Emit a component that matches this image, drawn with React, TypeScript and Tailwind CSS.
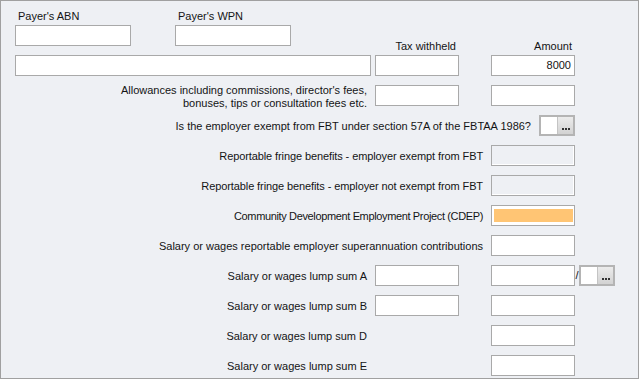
const box = "h-[21px] border border-[#a9a9a9] bg-white";
const disabledBox =
  "h-[21px] border border-[#a9a9a9] bg-[#eef0f4] shadow-[inset_-1px_-1px_0_#ffffff]";

function Ellipsis() {
  return (
    <div className="flex h-[21px] w-[36px] border-2 border-[#b4b4b4] bg-white">
      <div className="flex-1 bg-white" />
      <div className="flex w-[16px] items-end justify-center border-l border-[#c4c4c4] bg-gradient-to-b from-[#ececec] to-[#d2d2d2] pb-[4px]">
        <div className="flex gap-[1px]">
          <span className="h-[2px] w-[2px] bg-[#333]" />
          <span className="h-[2px] w-[2px] bg-[#333]" />
          <span className="h-[2px] w-[2px] bg-[#333]" />
        </div>
      </div>
    </div>
  );
}

function Label({ w, children, track = "" }: { w: string; children: React.ReactNode; track?: string }) {
  return <div className={`${w} ${track} text-right leading-[13px] pt-[1px]`}>{children}</div>;
}

export default function App() {
  return (
    <div
      className="h-[379px] w-[639px] overflow-hidden border border-[#a0a0a0] bg-[#eef0f4] text-[11px] text-[#141414]"
      style={{ fontFamily: '"Liberation Sans", Arial, sans-serif' }}
    >
      <div className="pl-[14px] pt-[9px]">
        {/* payer labels */}
        <div className="flex h-[13px] leading-[13px]">
          <span className="w-[160px] pl-[3px]">Payer's ABN</span>
          <span className="pl-[3px]">Payer's WPN</span>
        </div>

        {/* payer inputs + column headers */}
        <div className="mt-[2px] flex h-[30px]">
          <div className={`${box} w-[116px]`} />
          <div className={`${box} ml-[44px] w-[116px]`} />
          <div className="mb-[2px] ml-[84px] w-[84px] self-end pr-[3px] text-right leading-[13px]">
            Tax withheld
          </div>
          <div className="mb-[2px] ml-[32px] w-[84px] self-end pr-[3px] text-right leading-[13px]">
            Amount
          </div>
        </div>

        <div className="flex flex-col gap-[9px]">
          <div className="flex h-[21px]">
            <div className={`${box} w-[356px]`} />
            <div className={`${box} ml-[4px] w-[84px]`} />
            <div className={`${box} ml-[32px] flex w-[84px] items-center justify-end pr-[3px]`}>
              8000
            </div>
          </div>

          <div className="flex h-[21px] items-start">
            <div className="-mt-[1px] w-[352px] text-right leading-[13px]">
              Allowances including commissions, director's fees,
              <br />
              bonuses, tips or consultation fees etc.
            </div>
            <div className={`${box} ml-[8px] w-[84px]`} />
            <div className={`${box} ml-[32px] w-[84px]`} />
          </div>

          <div className="flex h-[21px] items-center">
            <Label w="w-[516px]">
              Is the employer exempt from FBT under section 57A of the FBTAA 1986?
            </Label>
            <div className="ml-[8px]">
              <Ellipsis />
            </div>
          </div>

          <div className="flex h-[21px] items-center">
            <Label w="w-[468px]" track="tracking-[-0.1px]">
              Reportable fringe benefits - employer exempt from FBT
            </Label>
            <div className={`${disabledBox} ml-[8px] w-[84px]`} />
          </div>

          <div className="flex h-[21px] items-center">
            <Label w="w-[468px]" track="tracking-[-0.1px]">
              Reportable fringe benefits - employer not exempt from FBT
            </Label>
            <div className={`${disabledBox} ml-[8px] w-[84px]`} />
          </div>

          <div className="flex h-[21px] items-center">
            <Label w="w-[468px]" track="tracking-[-0.36px]">
              Community Development Employment Project (CDEP)
            </Label>
            <div className={`${box} ml-[8px] w-[84px] pb-[3px] pl-[2px] pr-[1px] pt-[3px]`}>
              <div className="h-full w-full bg-[#ffc574]" />
            </div>
          </div>

          <div className="flex h-[21px] items-center">
            <Label w="w-[468px]">
              Salary or wages reportable employer superannuation contributions
            </Label>
            <div className={`${box} ml-[8px] w-[84px]`} />
          </div>

          <div className="flex h-[21px] items-center">
            <Label w="w-[352px]">Salary or wages lump sum A</Label>
            <div className={`${box} ml-[8px] w-[84px]`} />
            <div className={`${box} ml-[32px] w-[84px]`} />
            <span className="flex w-[4px] justify-center">/</span>
            <Ellipsis />
          </div>

          <div className="flex h-[21px] items-center">
            <Label w="w-[352px]">Salary or wages lump sum B</Label>
            <div className={`${box} ml-[8px] w-[84px]`} />
            <div className={`${box} ml-[32px] w-[84px]`} />
          </div>

          <div className="flex h-[21px] items-center">
            <Label w="w-[352px]">Salary or wages lump sum D</Label>
            <div className={`${box} ml-[124px] w-[84px]`} />
          </div>

          <div className="flex h-[21px] items-center">
            <Label w="w-[352px]">Salary or wages lump sum E</Label>
            <div className={`${box} ml-[124px] w-[84px]`} />
          </div>
        </div>
      </div>
    </div>
  );
}
